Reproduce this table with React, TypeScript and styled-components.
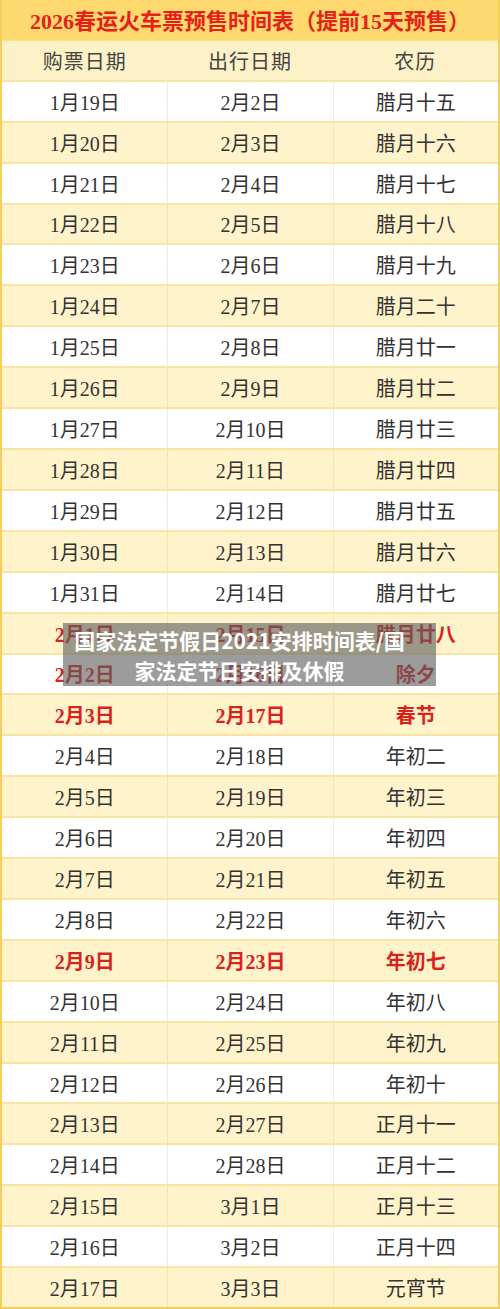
import styled, { createGlobalStyle } from "styled-components";

const GlobalStyle = createGlobalStyle`
  html, body {
    margin: 0;
    padding: 0;
    background: #fff;
  }
`;

type Row = {
  buy: string;
  go: string;
  lunar: string;
  hot?: boolean;
};

const rows: Row[] = [
  { buy: "1月19日", go: "2月2日", lunar: "腊月十五" },
  { buy: "1月20日", go: "2月3日", lunar: "腊月十六" },
  { buy: "1月21日", go: "2月4日", lunar: "腊月十七" },
  { buy: "1月22日", go: "2月5日", lunar: "腊月十八" },
  { buy: "1月23日", go: "2月6日", lunar: "腊月十九" },
  { buy: "1月24日", go: "2月7日", lunar: "腊月二十" },
  { buy: "1月25日", go: "2月8日", lunar: "腊月廿一" },
  { buy: "1月26日", go: "2月9日", lunar: "腊月廿二" },
  { buy: "1月27日", go: "2月10日", lunar: "腊月廿三" },
  { buy: "1月28日", go: "2月11日", lunar: "腊月廿四" },
  { buy: "1月29日", go: "2月12日", lunar: "腊月廿五" },
  { buy: "1月30日", go: "2月13日", lunar: "腊月廿六" },
  { buy: "1月31日", go: "2月14日", lunar: "腊月廿七" },
  { buy: "2月1日", go: "2月15日", lunar: "腊月廿八", hot: true },
  { buy: "2月2日", go: "2月16日", lunar: "除夕", hot: true },
  { buy: "2月3日", go: "2月17日", lunar: "春节", hot: true },
  { buy: "2月4日", go: "2月18日", lunar: "年初二" },
  { buy: "2月5日", go: "2月19日", lunar: "年初三" },
  { buy: "2月6日", go: "2月20日", lunar: "年初四" },
  { buy: "2月7日", go: "2月21日", lunar: "年初五" },
  { buy: "2月8日", go: "2月22日", lunar: "年初六" },
  { buy: "2月9日", go: "2月23日", lunar: "年初七", hot: true },
  { buy: "2月10日", go: "2月24日", lunar: "年初八" },
  { buy: "2月11日", go: "2月25日", lunar: "年初九" },
  { buy: "2月12日", go: "2月26日", lunar: "年初十" },
  { buy: "2月13日", go: "2月27日", lunar: "正月十一" },
  { buy: "2月14日", go: "2月28日", lunar: "正月十二" },
  { buy: "2月15日", go: "3月1日", lunar: "正月十三" },
  { buy: "2月16日", go: "3月2日", lunar: "正月十四" },
  { buy: "2月17日", go: "3月3日", lunar: "元宵节" },
];

function App() {
  return (
    <>
      <GlobalStyle />
      <Page>
        <Table>
          <Title>2026春运火车票预售时间表（提前15天预售）</Title>
          <HeadRow>
            <Cell>购票日期</Cell>
            <Cell>出行日期</Cell>
            <Cell>农历</Cell>
          </HeadRow>
          {rows.map((r, i) => (
            <DataRow key={r.buy} $striped={i % 2 === 1}>
              <Cell $hot={r.hot}>{r.buy}</Cell>
              <Cell $hot={r.hot}>{r.go}</Cell>
              <Cell $hot={r.hot}>{r.lunar}</Cell>
            </DataRow>
          ))}
        </Table>
        {/* watermark caption laid over the table */}
        <Caption>
          国家法定节假日2021安排时间表/国
          <br />
          家法定节日安排及休假
        </Caption>
      </Page>
    </>
  );
}

export default App;

const Page = styled.div`
  position: relative;
  width: 500px;
  height: 1309px;
  overflow: hidden;
`;

const Table = styled.div`
  display: flex;
  flex-direction: column;
  height: 1309px;
  box-sizing: border-box;
  border-left: 2px solid #f3cf5c;
  border-right: 2px solid #f3cf5c;
  border-bottom: 2px solid #f3cf5c;
  font-family: "Liberation Serif", "Noto Sans CJK SC", serif;
`;

const Title = styled.div`
  flex: 1;
  display: flex;
  align-items: center;
  justify-content: center;
  background: #fdd96f;
  color: #e4221a;
  font-size: 22px;
  font-weight: bold;
  padding-bottom: 1px;
`;

const HeadRow = styled.div`
  flex: 1;
  display: grid;
  grid-template-columns: 1fr 1fr 1fr;
  background: #fdf1c7;
  color: #444;
  font-size: 20px;
  letter-spacing: 1px;
  border-top: 1px solid #f8e394;
  border-bottom: 2px solid #f8e6a0;
`;

const DataRow = styled.div<{ $striped: boolean }>`
  flex: 1;
  display: grid;
  grid-template-columns: 1fr 1fr 1fr;
  background: ${(p) => (p.$striped ? "#fff3cc" : "#ffffff")};
  border-bottom: 2px solid #f8e6a0;
  font-size: 20px;
  color: #333;

  & > div + div {
    border-left: 1px solid ${(p) => (p.$striped ? "#f6e4a6" : "#ebebeb")};
  }

  &:last-child {
    border-bottom: none;
  }
`;

const Cell = styled.div<{ $hot?: boolean }>`
  display: flex;
  align-items: center;
  justify-content: center;
  color: ${(p) => (p.$hot ? "#d8231c" : "inherit")};
  font-weight: ${(p) => (p.$hot ? "bold" : "normal")};
`;

const Caption = styled.div`
  position: absolute;
  left: 63px;
  top: 623px;
  width: 373px;
  height: 63px;
  box-sizing: border-box;
  padding: 2px 20px 0 0;
  background: rgba(95, 95, 95, 0.62);
  color: #fff;
  font-family: "Noto Sans CJK SC", sans-serif;
  font-weight: bold;
  font-size: 21px;
  line-height: 30px;
  text-align: center;
  white-space: nowrap;
`;
